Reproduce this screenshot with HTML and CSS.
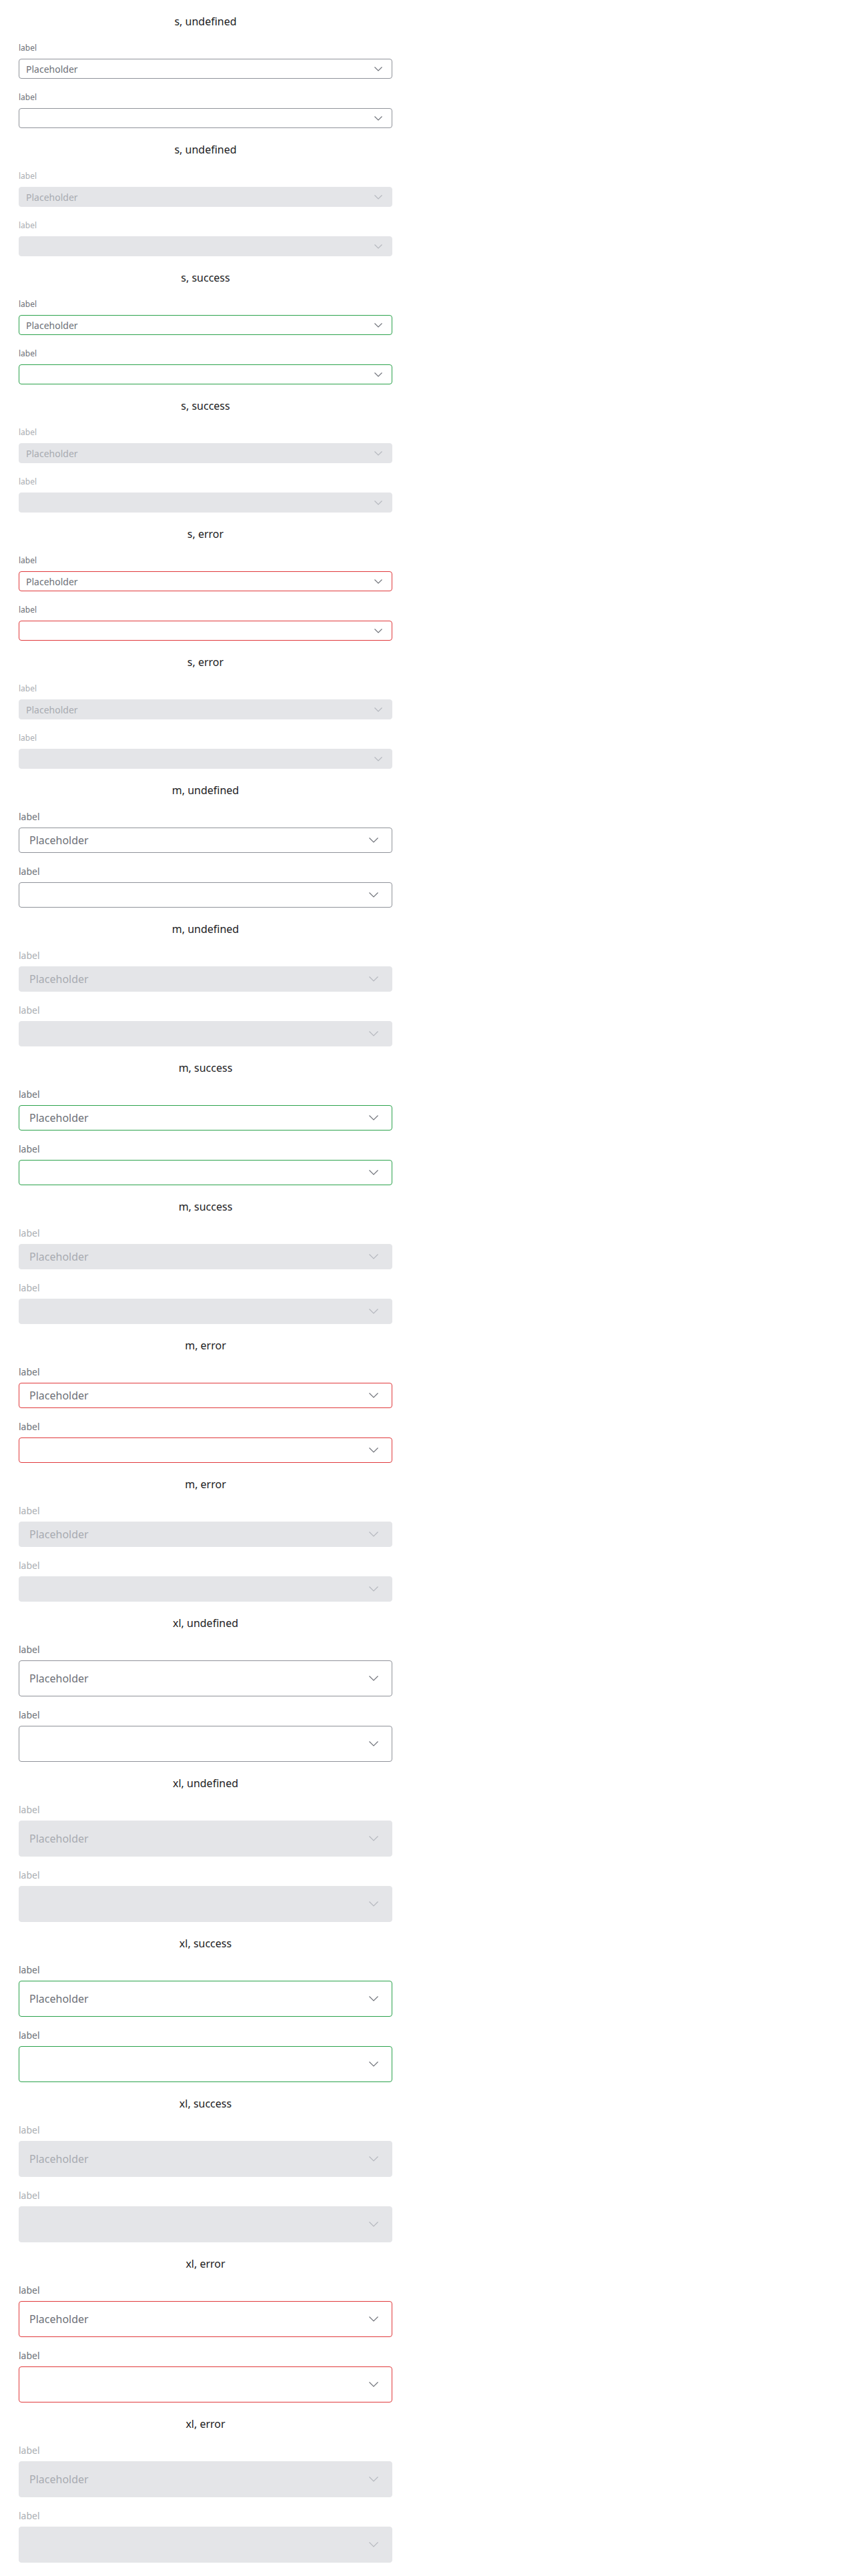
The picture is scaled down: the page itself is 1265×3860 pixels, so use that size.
FILE: index.html
```html
<!DOCTYPE html>
<html lang="en">
<head>
<meta charset="utf-8">
<title>Select sizes</title>
<link rel="stylesheet" href="styles.css">
</head>
<body>
<div class="page">

<section class="section s undefined">
  <div class="title">s, undefined</div>
  <div class="field"><div class="label">label</div><div class="select"><span class="ph">Placeholder</span><svg class="chev" width="12" height="7" viewBox="0 0 12 7"><path d="M0.5 0.5 L6 6 L11.5 0.5"/></svg></div></div>
  <div class="field"><div class="label">label</div><div class="select"><span class="ph"></span><svg class="chev" width="12" height="7" viewBox="0 0 12 7"><path d="M0.5 0.5 L6 6 L11.5 0.5"/></svg></div></div>
</section>
<section class="section s undefined disabled">
  <div class="title">s, undefined</div>
  <div class="field"><div class="label">label</div><div class="select"><span class="ph">Placeholder</span><svg class="chev" width="12" height="7" viewBox="0 0 12 7"><path d="M0.5 0.5 L6 6 L11.5 0.5"/></svg></div></div>
  <div class="field"><div class="label">label</div><div class="select"><span class="ph"></span><svg class="chev" width="12" height="7" viewBox="0 0 12 7"><path d="M0.5 0.5 L6 6 L11.5 0.5"/></svg></div></div>
</section>
<section class="section s success">
  <div class="title">s, success</div>
  <div class="field"><div class="label">label</div><div class="select"><span class="ph">Placeholder</span><svg class="chev" width="12" height="7" viewBox="0 0 12 7"><path d="M0.5 0.5 L6 6 L11.5 0.5"/></svg></div></div>
  <div class="field"><div class="label">label</div><div class="select"><span class="ph"></span><svg class="chev" width="12" height="7" viewBox="0 0 12 7"><path d="M0.5 0.5 L6 6 L11.5 0.5"/></svg></div></div>
</section>
<section class="section s success disabled">
  <div class="title">s, success</div>
  <div class="field"><div class="label">label</div><div class="select"><span class="ph">Placeholder</span><svg class="chev" width="12" height="7" viewBox="0 0 12 7"><path d="M0.5 0.5 L6 6 L11.5 0.5"/></svg></div></div>
  <div class="field"><div class="label">label</div><div class="select"><span class="ph"></span><svg class="chev" width="12" height="7" viewBox="0 0 12 7"><path d="M0.5 0.5 L6 6 L11.5 0.5"/></svg></div></div>
</section>
<section class="section s error">
  <div class="title">s, error</div>
  <div class="field"><div class="label">label</div><div class="select"><span class="ph">Placeholder</span><svg class="chev" width="12" height="7" viewBox="0 0 12 7"><path d="M0.5 0.5 L6 6 L11.5 0.5"/></svg></div></div>
  <div class="field"><div class="label">label</div><div class="select"><span class="ph"></span><svg class="chev" width="12" height="7" viewBox="0 0 12 7"><path d="M0.5 0.5 L6 6 L11.5 0.5"/></svg></div></div>
</section>
<section class="section s error disabled">
  <div class="title">s, error</div>
  <div class="field"><div class="label">label</div><div class="select"><span class="ph">Placeholder</span><svg class="chev" width="12" height="7" viewBox="0 0 12 7"><path d="M0.5 0.5 L6 6 L11.5 0.5"/></svg></div></div>
  <div class="field"><div class="label">label</div><div class="select"><span class="ph"></span><svg class="chev" width="12" height="7" viewBox="0 0 12 7"><path d="M0.5 0.5 L6 6 L11.5 0.5"/></svg></div></div>
</section>

<section class="section m undefined">
  <div class="title">m, undefined</div>
  <div class="field"><div class="label">label</div><div class="select"><span class="ph">Placeholder</span><svg class="chev" width="14" height="8" viewBox="0 0 14 8"><path d="M0.5 0.5 L7 7 L13.5 0.5"/></svg></div></div>
  <div class="field"><div class="label">label</div><div class="select"><span class="ph"></span><svg class="chev" width="14" height="8" viewBox="0 0 14 8"><path d="M0.5 0.5 L7 7 L13.5 0.5"/></svg></div></div>
</section>
<section class="section m undefined disabled">
  <div class="title">m, undefined</div>
  <div class="field"><div class="label">label</div><div class="select"><span class="ph">Placeholder</span><svg class="chev" width="14" height="8" viewBox="0 0 14 8"><path d="M0.5 0.5 L7 7 L13.5 0.5"/></svg></div></div>
  <div class="field"><div class="label">label</div><div class="select"><span class="ph"></span><svg class="chev" width="14" height="8" viewBox="0 0 14 8"><path d="M0.5 0.5 L7 7 L13.5 0.5"/></svg></div></div>
</section>
<section class="section m success">
  <div class="title">m, success</div>
  <div class="field"><div class="label">label</div><div class="select"><span class="ph">Placeholder</span><svg class="chev" width="14" height="8" viewBox="0 0 14 8"><path d="M0.5 0.5 L7 7 L13.5 0.5"/></svg></div></div>
  <div class="field"><div class="label">label</div><div class="select"><span class="ph"></span><svg class="chev" width="14" height="8" viewBox="0 0 14 8"><path d="M0.5 0.5 L7 7 L13.5 0.5"/></svg></div></div>
</section>
<section class="section m success disabled">
  <div class="title">m, success</div>
  <div class="field"><div class="label">label</div><div class="select"><span class="ph">Placeholder</span><svg class="chev" width="14" height="8" viewBox="0 0 14 8"><path d="M0.5 0.5 L7 7 L13.5 0.5"/></svg></div></div>
  <div class="field"><div class="label">label</div><div class="select"><span class="ph"></span><svg class="chev" width="14" height="8" viewBox="0 0 14 8"><path d="M0.5 0.5 L7 7 L13.5 0.5"/></svg></div></div>
</section>
<section class="section m error">
  <div class="title">m, error</div>
  <div class="field"><div class="label">label</div><div class="select"><span class="ph">Placeholder</span><svg class="chev" width="14" height="8" viewBox="0 0 14 8"><path d="M0.5 0.5 L7 7 L13.5 0.5"/></svg></div></div>
  <div class="field"><div class="label">label</div><div class="select"><span class="ph"></span><svg class="chev" width="14" height="8" viewBox="0 0 14 8"><path d="M0.5 0.5 L7 7 L13.5 0.5"/></svg></div></div>
</section>
<section class="section m error disabled">
  <div class="title">m, error</div>
  <div class="field"><div class="label">label</div><div class="select"><span class="ph">Placeholder</span><svg class="chev" width="14" height="8" viewBox="0 0 14 8"><path d="M0.5 0.5 L7 7 L13.5 0.5"/></svg></div></div>
  <div class="field"><div class="label">label</div><div class="select"><span class="ph"></span><svg class="chev" width="14" height="8" viewBox="0 0 14 8"><path d="M0.5 0.5 L7 7 L13.5 0.5"/></svg></div></div>
</section>

<section class="section xl undefined">
  <div class="title">xl, undefined</div>
  <div class="field"><div class="label">label</div><div class="select"><span class="ph">Placeholder</span><svg class="chev" width="14" height="8" viewBox="0 0 14 8"><path d="M0.5 0.5 L7 7 L13.5 0.5"/></svg></div></div>
  <div class="field"><div class="label">label</div><div class="select"><span class="ph"></span><svg class="chev" width="14" height="8" viewBox="0 0 14 8"><path d="M0.5 0.5 L7 7 L13.5 0.5"/></svg></div></div>
</section>
<section class="section xl undefined disabled">
  <div class="title">xl, undefined</div>
  <div class="field"><div class="label">label</div><div class="select"><span class="ph">Placeholder</span><svg class="chev" width="14" height="8" viewBox="0 0 14 8"><path d="M0.5 0.5 L7 7 L13.5 0.5"/></svg></div></div>
  <div class="field"><div class="label">label</div><div class="select"><span class="ph"></span><svg class="chev" width="14" height="8" viewBox="0 0 14 8"><path d="M0.5 0.5 L7 7 L13.5 0.5"/></svg></div></div>
</section>
<section class="section xl success">
  <div class="title">xl, success</div>
  <div class="field"><div class="label">label</div><div class="select"><span class="ph">Placeholder</span><svg class="chev" width="14" height="8" viewBox="0 0 14 8"><path d="M0.5 0.5 L7 7 L13.5 0.5"/></svg></div></div>
  <div class="field"><div class="label">label</div><div class="select"><span class="ph"></span><svg class="chev" width="14" height="8" viewBox="0 0 14 8"><path d="M0.5 0.5 L7 7 L13.5 0.5"/></svg></div></div>
</section>
<section class="section xl success disabled">
  <div class="title">xl, success</div>
  <div class="field"><div class="label">label</div><div class="select"><span class="ph">Placeholder</span><svg class="chev" width="14" height="8" viewBox="0 0 14 8"><path d="M0.5 0.5 L7 7 L13.5 0.5"/></svg></div></div>
  <div class="field"><div class="label">label</div><div class="select"><span class="ph"></span><svg class="chev" width="14" height="8" viewBox="0 0 14 8"><path d="M0.5 0.5 L7 7 L13.5 0.5"/></svg></div></div>
</section>
<section class="section xl error">
  <div class="title">xl, error</div>
  <div class="field"><div class="label">label</div><div class="select"><span class="ph">Placeholder</span><svg class="chev" width="14" height="8" viewBox="0 0 14 8"><path d="M0.5 0.5 L7 7 L13.5 0.5"/></svg></div></div>
  <div class="field"><div class="label">label</div><div class="select"><span class="ph"></span><svg class="chev" width="14" height="8" viewBox="0 0 14 8"><path d="M0.5 0.5 L7 7 L13.5 0.5"/></svg></div></div>
</section>
<section class="section xl error disabled">
  <div class="title">xl, error</div>
  <div class="field"><div class="label">label</div><div class="select"><span class="ph">Placeholder</span><svg class="chev" width="14" height="8" viewBox="0 0 14 8"><path d="M0.5 0.5 L7 7 L13.5 0.5"/></svg></div></div>
  <div class="field"><div class="label">label</div><div class="select"><span class="ph"></span><svg class="chev" width="14" height="8" viewBox="0 0 14 8"><path d="M0.5 0.5 L7 7 L13.5 0.5"/></svg></div></div>
</section>

</div>
</body>
</html>
```

FILE: styles.css
```css
body {
  margin: 8px;
  background: #ffffff;
  font-family: "Noto Sans", "Open Sans", sans-serif;
}

.page {
  width: 560px;
  padding: 0 20px;
}

.section {
  display: flex;
  flex-direction: column;
  gap: 18px;
  padding: 12px 0 8px;
}

.title {
  font-size: 16px;
  line-height: 24px;
  text-align: center;
  color: #1c1c1e;
}

.field {
  display: flex;
  flex-direction: column;
  gap: 6px;
}

.label {
  font-size: 14px;
  line-height: 20px;
  color: #6d7077;
}

.s .label {
  font-size: 12px;
}

.select {
  box-sizing: border-box;
  display: flex;
  align-items: center;
  justify-content: space-between;
  border: 1px solid #8f9299;
  border-radius: 4px;
  background: #ffffff;
  color: #6d7077;
}

.chev {
  flex: none;
}

.chev path {
  fill: none;
  stroke: #6d7077;
  stroke-width: 1.1;
}

.s .select {
  height: 30px;
  padding: 0 14px 0 10px;
  font-size: 14px;
}

.m .select {
  height: 38px;
  padding: 0 20px 0 15px;
  font-size: 16px;
}

.xl .select {
  height: 54px;
  padding: 0 20px 0 15px;
  font-size: 16px;
}

.success .select {
  border-color: #2aa24b;
}

.error .select {
  border-color: #e0393b;
}

.disabled .label {
  color: #aaadb2;
}

.disabled .select {
  background: #e4e5e8;
  border-color: #e4e5e8;
  color: #a8abb1;
}

.disabled .chev path {
  stroke: #b4b7bd;
}
```
